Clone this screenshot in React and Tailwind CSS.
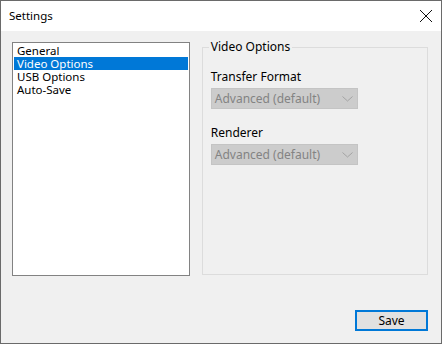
import React from 'react'

const items = ['General', 'Video Options', 'USB Options', 'Auto-Save']

function Combo() {
    return (
        <div className="w-[147px] h-[21px] bg-[#cccccc] border border-[#c4c4c4] flex items-center justify-between pl-[3px] pr-[3px] text-[#838383]">
            <span className="leading-none">Advanced (default)</span>
            <svg width="11" height="6" viewBox="0 0 11 6" className="mr-[1px]">
                <path d="M0.5 0.5 L5.5 5 L10.5 0.5" fill="none" stroke="#a3a3a3" strokeWidth="1" />
            </svg>
        </div>
    )
}

export default function App() {
    return (
        <div className="w-[442px] h-[344px] bg-[#f0f0f0] border border-[#6a6a6a] flex flex-col text-[12px] text-black select-none" style={{ fontFamily: '"Noto Sans", "Open Sans", sans-serif' }}>
            <div className="h-[30px] bg-white flex items-center justify-between pl-[8px] pr-[7px] shrink-0">
                <span className="text-[11.5px] leading-none">Settings</span>
                <svg width="14" height="14" viewBox="0 0 14 14" className="mr-[1px]">
                    <path d="M1 1 L13 13 M13 1 L1 13" stroke="#111" strokeWidth="1" />
                </svg>
            </div>

            <div className="flex-1 flex flex-col pl-[11px] pr-[13px] pt-[11px] pb-[12px]">
                <div className="flex gap-[12px]">
                    <div className="w-[180px] h-[234px] bg-white border border-[#828282] pt-[1px] px-[1px]">
                        {items.map((it) => (
                            <div key={it} className={`h-[13px] leading-[13px] pl-[3px] text-[11.5px] ${it === 'Video Options' ? 'bg-[#0078d7] text-white' : ''}`}>
                                {it}
                            </div>
                        ))}
                    </div>

                    <div className="relative w-[229px] h-[228px] mt-[5px] border border-[#dcdcdc] pl-[8px] pt-[22px]">
                        <span className="absolute left-[6px] -top-[8px] bg-[#f0f0f0] px-[2px] leading-[14px]">Video Options</span>
                        <div className="leading-[14px]">Transfer Format</div>
                        <div className="mt-[4px]"><Combo /></div>
                        <div className="mt-[17px] leading-[14px]">Renderer</div>
                        <div className="mt-[4px]"><Combo /></div>
                    </div>
                </div>

                <div className="flex-1" />
                <div className="flex justify-end">
                    <button className="w-[73px] h-[21px] bg-[#e1e1e1] border-2 border-[#0078d7] flex items-center justify-center leading-none">
                        Save
                    </button>
                </div>
            </div>
        </div>
    )
}
